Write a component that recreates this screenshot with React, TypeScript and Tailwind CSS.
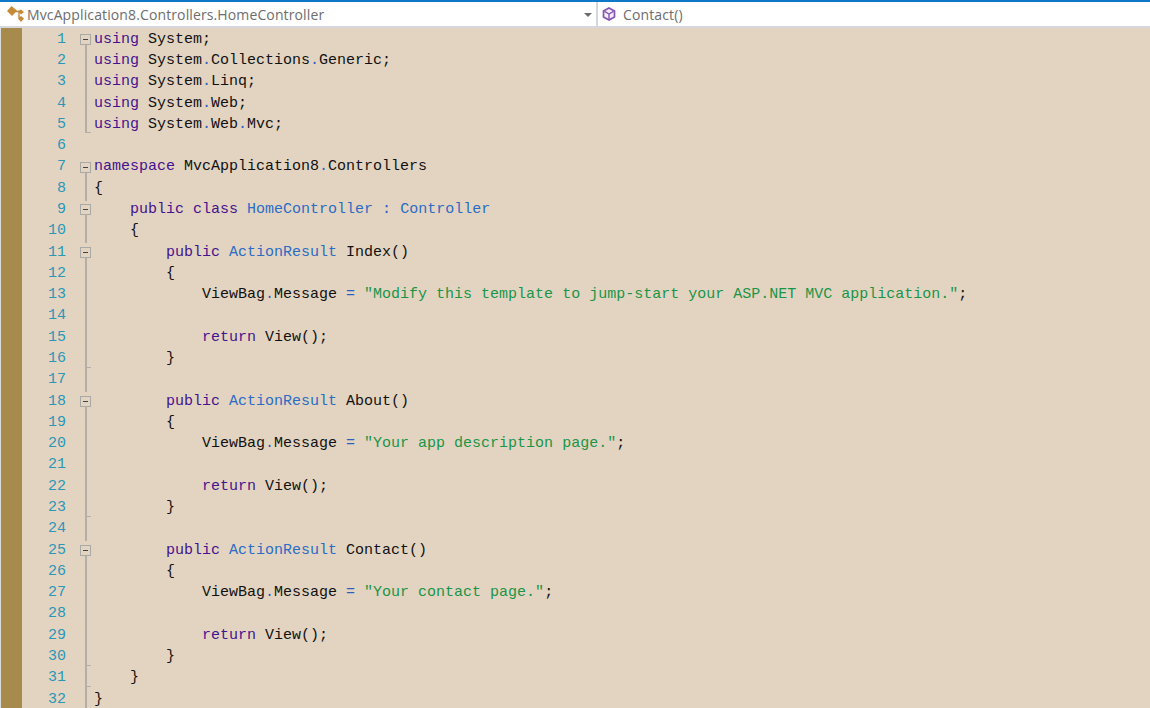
type Tok = [string, "k" | "t" | "s" | "o" | "p"];

const k = (s: string): Tok => [s, "k"];
const t = (s: string): Tok => [s, "t"];
const s = (x: string): Tok => [x, "s"];
const o = (x: string): Tok => [x, "o"];
const p = (x: string): Tok => [x, "p"];

const tokColor = {
  k: "text-[#45128f]",
  t: "text-[#2b6cc4]",
  s: "text-[#1a9548]",
  o: "text-[#2b5fc0]",
  p: "text-[#111111]",
};

type Fold = "box" | "line" | "end" | "tee" | "none";

const usingLine = (...parts: string[]): Tok[] => {
  const out: Tok[] = [k("using"), p(" System")];
  parts.forEach((x) => {
    out.push(o("."));
    out.push(p(x));
  });
  out.push(p(";"));
  return out;
};

const lines: { fold: Fold; code: Tok[] }[] = [
  { fold: "box", code: usingLine() },
  { fold: "line", code: usingLine("Collections", "Generic") },
  { fold: "line", code: usingLine("Linq") },
  { fold: "line", code: usingLine("Web") },
  { fold: "end", code: usingLine("Web", "Mvc") },
  { fold: "none", code: [] },
  { fold: "box", code: [k("namespace"), p(" MvcApplication8"), o("."), p("Controllers")] },
  { fold: "line", code: [p("{")] },
  { fold: "box", code: [p("    "), k("public class"), p(" "), t("HomeController"), p(" "), o(":"), p(" "), t("Controller")] },
  { fold: "line", code: [p("    {")] },
  { fold: "box", code: [p("        "), k("public"), p(" "), t("ActionResult"), p(" Index()")] },
  { fold: "line", code: [p("        {")] },
  { fold: "line", code: [p("            ViewBag"), o("."), p("Message "), o("="), p(" "), s('"Modify this template to jump-start your ASP.NET MVC application."'), p(";")] },
  { fold: "line", code: [] },
  { fold: "line", code: [p("            "), k("return"), p(" View();")] },
  { fold: "tee", code: [p("        }")] },
  { fold: "line", code: [] },
  { fold: "box", code: [p("        "), k("public"), p(" "), t("ActionResult"), p(" About()")] },
  { fold: "line", code: [p("        {")] },
  { fold: "line", code: [p("            ViewBag"), o("."), p("Message "), o("="), p(" "), s('"Your app description page."'), p(";")] },
  { fold: "line", code: [] },
  { fold: "line", code: [p("            "), k("return"), p(" View();")] },
  { fold: "tee", code: [p("        }")] },
  { fold: "line", code: [] },
  { fold: "box", code: [p("        "), k("public"), p(" "), t("ActionResult"), p(" Contact()")] },
  { fold: "line", code: [p("        {")] },
  { fold: "line", code: [p("            ViewBag"), o("."), p("Message "), o("="), p(" "), s('"Your contact page."'), p(";")] },
  { fold: "line", code: [] },
  { fold: "line", code: [p("            "), k("return"), p(" View();")] },
  { fold: "tee", code: [p("        }")] },
  { fold: "tee", code: [p("    }")] },
  { fold: "line", code: [p("}")] },
];

function FoldMark({ fold }: { fold: Fold }) {
  if (fold === "none") return null;
  if (fold === "box") {
    return (
      <div className="w-[11px] h-full flex items-center relative">
        <div className="absolute left-[5px] top-[15px] -bottom-px w-[2px] bg-[#b2afa9]" />
        <div className="relative -mt-px w-[11px] h-[11px] border border-[#a9a9a6] bg-[#e3d4c1] flex items-center justify-center">
          <div className="w-[5px] h-px bg-[#444444]" />
        </div>
      </div>
    );
  }
  return (
    <div className="w-[11px] h-full relative">
      {fold === "end" ? (
        <div className="absolute left-[5px] top-0 h-[18px] w-[6px] border-l-2 border-b border-[#b2afa9]" />
      ) : (
        <div className="absolute left-[5px] top-0 -bottom-px w-[2px] bg-[#b2afa9]" />
      )}
      {fold === "tee" && <div className="absolute left-[5px] top-[18px] w-[6px] h-px bg-[#b2afa9]" />}
    </div>
  );
}

function ClassIcon() {
  return (
    <svg width="18" height="18" viewBox="0 0 18 18">
      <path d="M0 6 L4.5 1 L10 5.5 L5 11 Z" fill="#c98a35" />
      <path d="M11 6 L14 4.5 L17 7 L14 9.5 Z" fill="#c98a35" />
      <path d="M11 13.5 L14 11 L17 13.5 L14 17 Z" fill="#c98a35" />
      <path d="M7 6.5 H12 M12 7 V13" stroke="#b98a4c" strokeWidth="1.4" fill="none" />
    </svg>
  );
}

function CubeIcon() {
  return (
    <svg width="14" height="14" viewBox="0 0 14 14" fill="none">
      <path d="M7 1 L12.5 4 V10 L7 13 L1.5 10 V4 Z" fill="#f3edf8" stroke="#8654b4" strokeWidth="1.7" />
      <path d="M2.5 4.4 L7 7 L11.5 4.4 M7 7 V12" stroke="#8654b4" strokeWidth="1.4" />
    </svg>
  );
}

export default function App() {
  return (
    <div className="w-[1150px] h-[708px] overflow-hidden bg-[#e3d4c1] flex flex-col">
      <div className="h-[2px] shrink-0 bg-[#0f78c8]" />
      <div className="h-[24px] shrink-0 bg-white flex items-center font-['Open_Sans',sans-serif] text-[14px] text-[#6d6d6d]">
        <div className="w-[596px] h-full flex items-center relative pl-[7px]">
          <ClassIcon />
          <span className="ml-[2px] tracking-[0.12px]">MvcApplication8.Controllers.HomeController</span>
          <div className="absolute right-[4px] top-[11px] w-0 h-0 border-l-[4px] border-r-[4px] border-t-[4px] border-l-transparent border-r-transparent border-t-[#6d6d6d]" />
        </div>
        <div className="w-[2px] h-full bg-[#d5d7dd]" />
        <div className="flex-1 h-full flex items-center pl-[4px]">
          <CubeIcon />
          <span className="ml-[7px] tracking-[0.12px]">Contact()</span>
        </div>
      </div>
      <div className="h-[2px] shrink-0 bg-[#d5d7dd]" />
      <div className="flex-1 flex min-h-0">
        <div className="w-px shrink-0 bg-[#dcdcdc]" />
        <div className="w-[21px] shrink-0 bg-[#a68b4c]" />
        <div className="flex-1 flex flex-col pt-[1.4px] font-['Liberation_Mono',monospace] text-[15px]">
          {lines.map((line, i) => (
            <div key={i} className="h-[21.29px] shrink-0 flex items-center">
              <span className="w-[44px] shrink-0 text-right text-[#2b97b8]">{i + 1}</span>
              <div className="w-[14px] shrink-0" />
              <div className="w-[11px] h-full shrink-0">
                <FoldMark fold={line.fold} />
              </div>
              <div className="w-[3px] shrink-0" />
              <span className="whitespace-pre">
                {line.code.map((tok, j) => (
                  <span key={j} className={tokColor[tok[1]]}>
                    {tok[0]}
                  </span>
                ))}
              </span>
            </div>
          ))}
        </div>
      </div>
    </div>
  );
}
